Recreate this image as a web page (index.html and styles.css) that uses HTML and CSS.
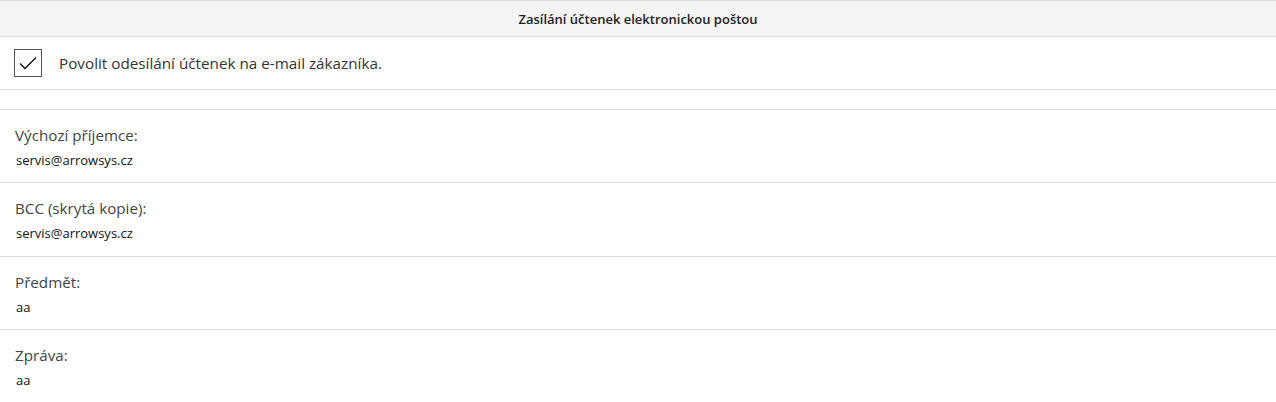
FILE: index.html
```html
<!DOCTYPE html>
<html lang="cs">
<head>
<meta charset="utf-8">
<title>Zasílání účtenek</title>
<link rel="stylesheet" href="styles.css">
</head>
<body>
<div class="panel">
  <div class="panel-header">Zasílání účtenek elektronickou poštou</div>
  <label class="check-row">
    <span class="checkbox">
      <svg width="20" height="16" viewBox="0 0 20 16"><path d="M2 8.5 L7 13.5 L18 2.5" fill="none" stroke="#111" stroke-width="1.4"/></svg>
    </span>
    <span class="check-text">Povolit odesílání účtenek na e-mail zákazníka.</span>
  </label>
  <div class="spacer"></div>
  <div class="field">
    <div class="field-label">Výchozí příjemce:</div>
    <div class="field-value">servis@arrowsys.cz</div>
  </div>
  <div class="field">
    <div class="field-label">BCC (skrytá kopie):</div>
    <div class="field-value">servis@arrowsys.cz</div>
  </div>
  <div class="field">
    <div class="field-label">Předmět:</div>
    <div class="field-value">aa</div>
  </div>
  <div class="field last">
    <div class="field-label">Zpráva:</div>
    <div class="field-value">aa</div>
  </div>
</div>
</body>
</html>
```
FILE: styles.css
```css
* { box-sizing: border-box; }
html, body { margin: 0; padding: 0; background: #fff; }
body { font-family: "Open Sans", "Noto Sans", sans-serif; color: #333; }

.panel { display: flex; flex-direction: column; width: 1276px; }

.panel-header {
  height: 37px;
  background: #f4f4f4;
  border-top: 1px solid #dcdcdc;
  border-bottom: 1px solid #dcdcdc;
  display: flex; align-items: center; justify-content: center;
  font-size: 13px; font-weight: 600; color: #222;
}

.check-row {
  height: 53px;
  display: flex; align-items: center;
  padding-left: 14px;
  border-bottom: 1px solid #dcdcdc;
}
.checkbox {
  width: 28px; height: 28px;
  border: 1px solid #555;
  display: flex; align-items: center; justify-content: center;
  margin-right: 17px;
}
.check-text { font-size: 15.25px; color: #333; }

.spacer { height: 20px; border-bottom: 1px solid #dcdcdc; }

.field {
  height: 73.4px;
  padding: 14px 0 0 15px;
  border-bottom: 1px solid #dcdcdc;
}
.field.last { border-bottom: none; }
.field-label { font-size: 15.2px; color: #444; line-height: 22px; }
.field-value { font-size: 13px; color: #111; line-height: 18px; margin-top: 5px; padding-left: 1px; }
```
